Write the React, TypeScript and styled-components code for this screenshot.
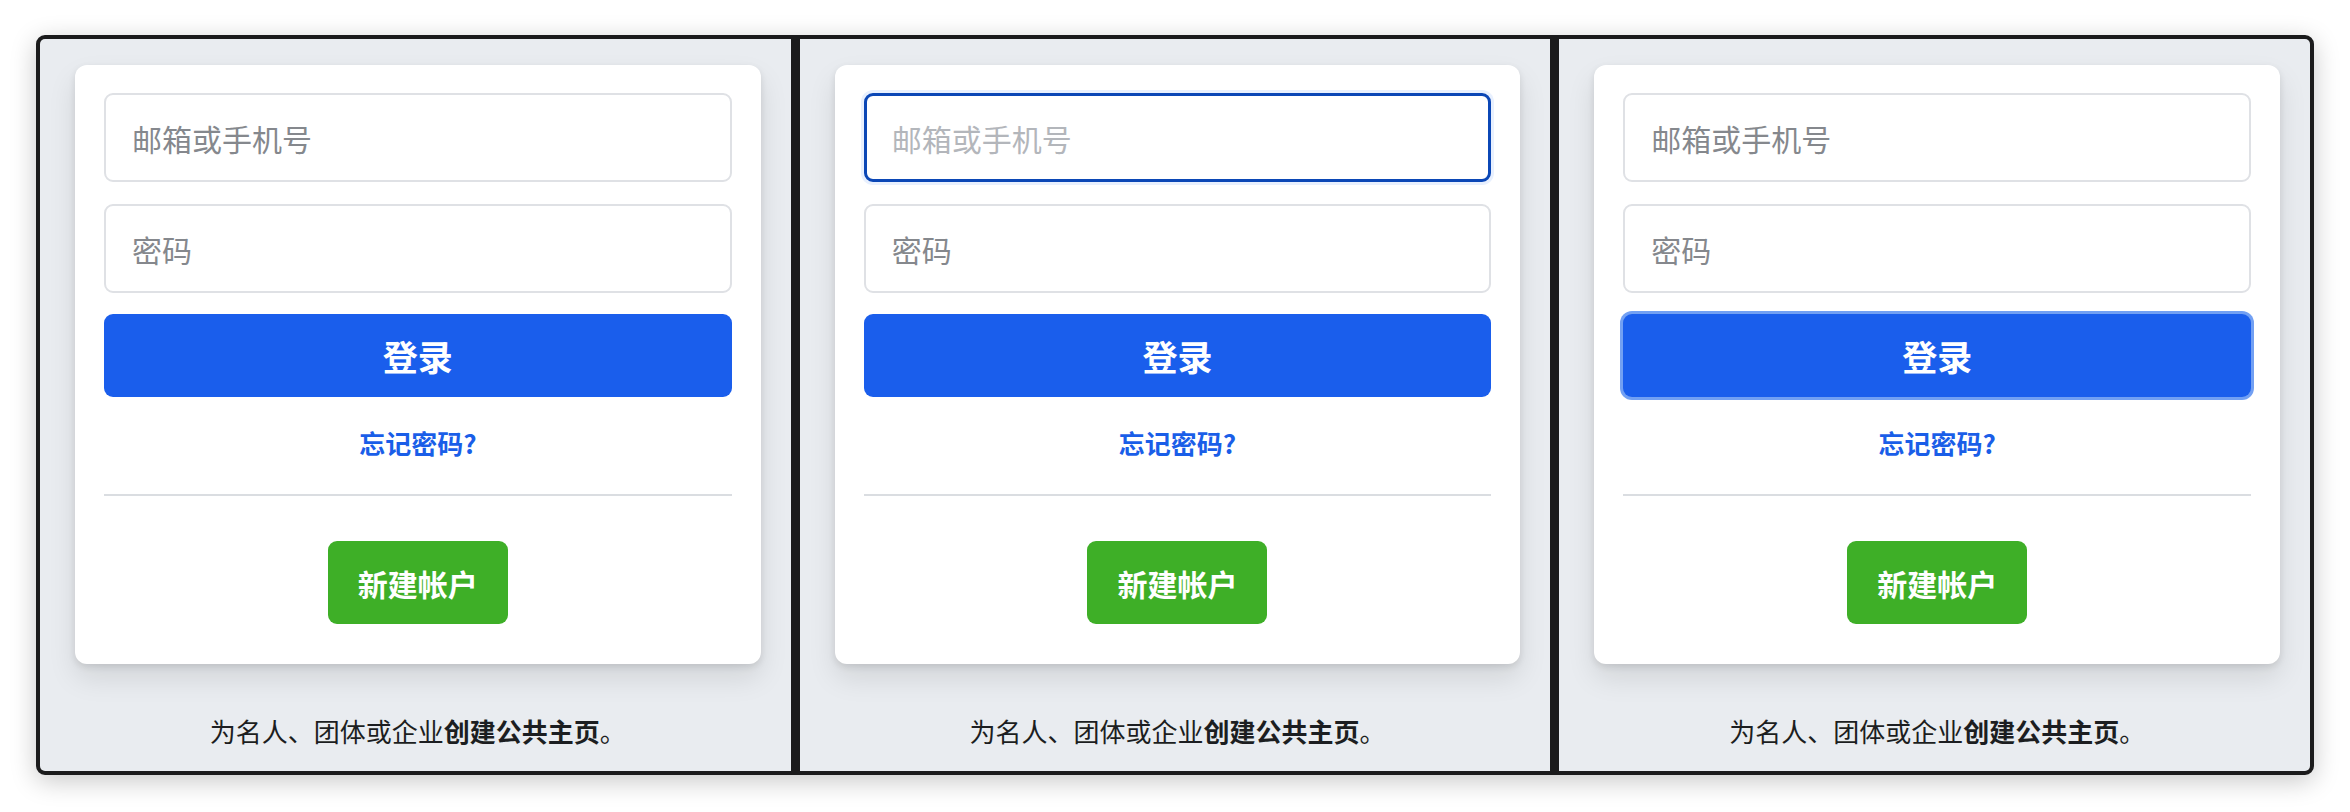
import React from 'react';
import styled, { createGlobalStyle, css } from 'styled-components';

const GlobalStyle = createGlobalStyle`
  * {
    box-sizing: border-box;
  }
  body {
    margin: 0;
    padding: 35px 36px 37px;
    background: #ffffff;
    font-family: "Noto Sans CJK SC", "Noto Sans", "Liberation Sans", sans-serif;
  }
`;

// the black frame: its own colour shows through the gaps as the dividers
const SFrame = styled.div`
  display: grid;
  grid-template-columns: repeat(3, 1fr);
  gap: 9px;
  background: #1b1b1c;
  border: 4px solid #1b1b1c;
  border-radius: 9px;
  overflow: hidden;
  box-shadow: 0 6px 26px rgba(0, 0, 0, 0.22);
`;

const SPanel = styled.section`
  display: flex;
  flex-direction: column;
  min-width: 0;
  padding: 26px 30px 22px 35px;
  background: #e9ecf0;
`;

const SCard = styled.form`
  display: flex;
  flex-direction: column;
  align-items: stretch;
  padding: 28px 29px 40px;
  background: #ffffff;
  border-radius: 12px;
  box-shadow: 0 3px 7px rgba(0, 0, 0, 0.1), 0 14px 28px rgba(0, 0, 0, 0.1);
`;

const SInput = styled.input<{ $focused?: boolean; $gap: number }>`
  width: 100%;
  height: 89px;
  margin-bottom: ${({ $gap }) => $gap}px;
  padding: 0 26px;
  font-family: inherit;
  font-size: 30px;
  color: #1c1e21;
  background: #ffffff;
  border: 2px solid #dfe1e5;
  border-radius: 9px;
  outline: none;

  &::placeholder {
    color: #85888d;
  }

  ${({ $focused }) => $focused && css`
    padding: 0 25px;
    border: 3px solid #0b47b6;
    box-shadow: 0 0 0 3px #e8f0fe;
    &::placeholder {
      color: #b3b6bb;
    }
  `}
`;

const SLoginButton = styled.button<{ $focused?: boolean }>`
  height: 83px;
  font-family: inherit;
  font-size: 35px;
  font-weight: 700;
  color: #ffffff;
  background: #1a5eec;
  border: none;
  border-radius: 9px;
  cursor: pointer;

  ${({ $focused }) => $focused && css`
    box-shadow: 0 0 0 3px #72a0f3;
  `}
`;

const SForgot = styled.a`
  margin-top: 29px;
  font-size: 26px;
  line-height: 34px;
  font-weight: 600;
  color: #1a5ee8;
  text-align: center;
  text-decoration: none;
`;

const SDivider = styled.hr`
  margin: 34px 0 0;
  height: 2px;
  border: none;
  background: #dadde1;
`;

const SCreateButton = styled.button`
  align-self: center;
  margin-top: 45px;
  width: 180px;
  height: 83px;
  font-family: inherit;
  font-size: 30px;
  font-weight: 700;
  color: #ffffff;
  background: #3eaf27;
  border: none;
  border-radius: 9px;
  cursor: pointer;
`;

const SFooter = styled.p`
  margin: 49px 0 0;
  font-size: 26px;
  line-height: 36px;
  color: #1c1e21;
  text-align: center;

  b {
    font-weight: 700;
  }
`;

type PanelState = 'idle' | 'input' | 'button';

const LoginPanel: React.FC<{ state: PanelState }> = ({ state }) => (
  <SPanel>
    <SCard onSubmit={(e) => e.preventDefault()}>
      <SInput
        type="text"
        placeholder="邮箱或手机号"
        $gap={22}
        $focused={state === 'input'}
      />
      <SInput type="password" placeholder="密码" $gap={21} />
      <SLoginButton type="submit" $focused={state === 'button'}>
        登录
      </SLoginButton>
      <SForgot href="#">忘记密码?</SForgot>
      <SDivider />
      <SCreateButton type="button">新建帐户</SCreateButton>
    </SCard>
    <SFooter>
      为名人、团体或企业<b>创建公共主页</b>。
    </SFooter>
  </SPanel>
);

const App: React.FC = () => {
  const states: PanelState[] = ['idle', 'input', 'button'];

  return (
    <>
      <GlobalStyle />
      <SFrame>
        {states.map((s) => (
          <LoginPanel key={s} state={s} />
        ))}
      </SFrame>
    </>
  );
};

export default App;
